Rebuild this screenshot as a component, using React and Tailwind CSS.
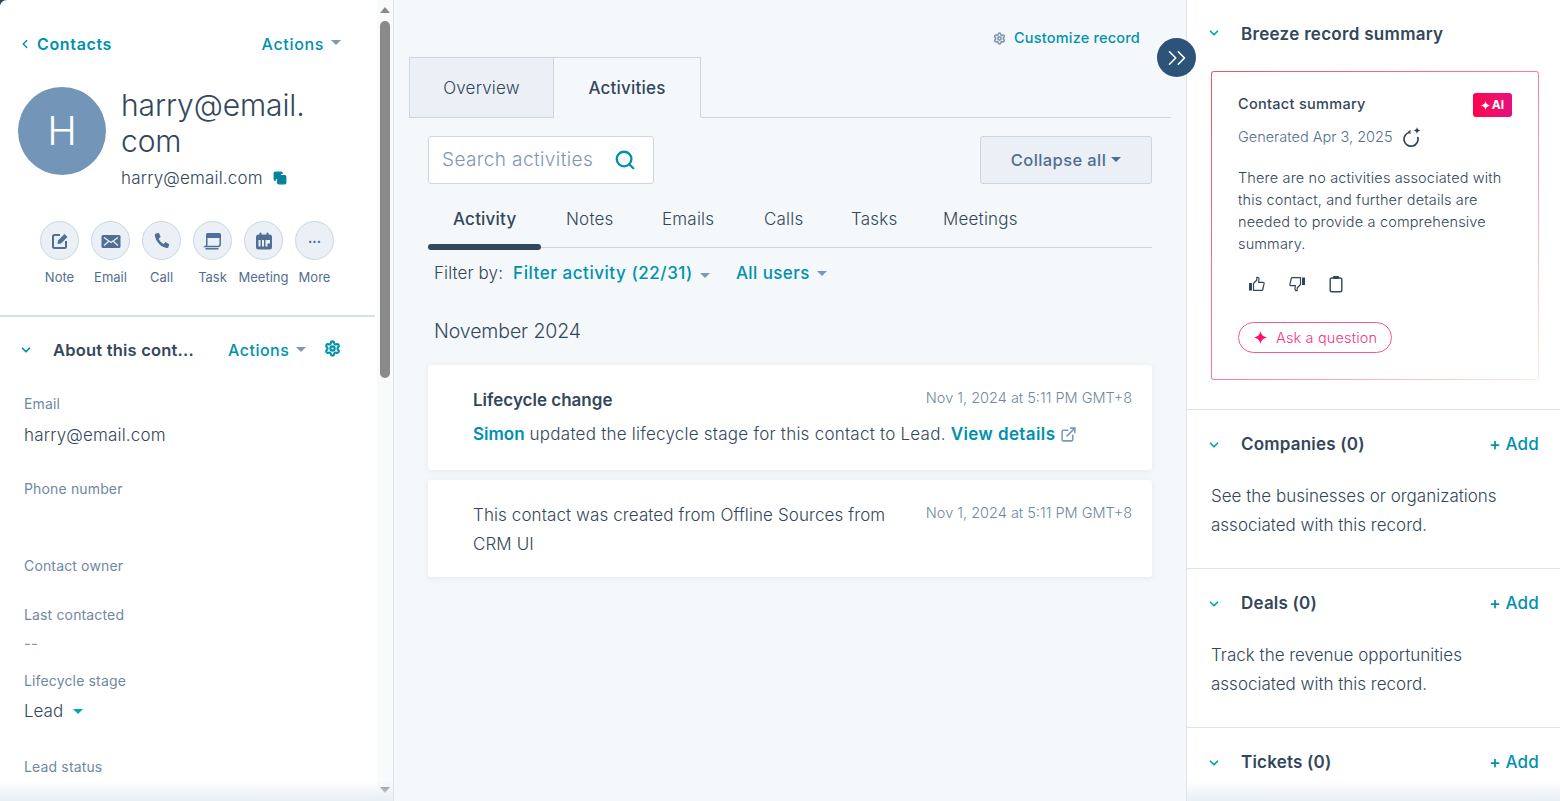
import React from 'react';
import { ChevronDown, ChevronLeft, ChevronsRight, Search, Settings, ExternalLink, Copy, Plus } from 'lucide-react';

function Caret({ className = 'border-t-[#7c98b6]' }) {
  return <span className={`inline-block w-0 h-0 border-x-[5px] border-x-transparent border-t-[5px] ${className}`} />;
}

function NoteIcon() {
  return (
    <svg width="20" height="20" viewBox="0 0 20 20" fill="none">
      <path d="M10 4H4.500A1.500 1.500 0 0 0 3 5.500v10A1.500 1.500 0 0 0 4.500 17h10a1.500 1.500 0 0 0 1.500-1.500V10" stroke="#4f6f94" strokeWidth="2" />
      <path d="M8 9.500 14.500 3 17.500 6 11 12.500 7.500 13z" fill="#4f6f94" />
    </svg>
  );
}

function MailIcon() {
  return (
    <svg width="20" height="20" viewBox="0 0 20 20" fill="none">
      <rect x="0.500" y="4" width="19" height="13" rx="1.500" fill="#4f6f94" />
      <path d="M3 6.500 10 11.500 17 6.500M3 14.500 7.500 10.500M17 14.500 12.500 10.500" stroke="#eaf0f6" strokeWidth="1.300" />
    </svg>
  );
}

function PhoneIcon() {
  return (
    <svg width="20" height="20" viewBox="0 0 20 20" fill="none">
      <path d="M4 2.500 7 2l1.700 4-2 1.600c.8 2.400 2.500 4.300 4.900 5.400l1.800-1.900 3.800 2.100-.7 2.800c-.2.7-1 1.200-1.800 1C8.500 15.800 3.800 10.700 2.900 4.500 2.800 3.500 3.200 2.800 4 2.500z" fill="#4f6f94" />
    </svg>
  );
}

function TaskIcon() {
  return (
    <svg width="20" height="20" viewBox="0 0 20 20" fill="none">
      <rect x="3" y="2" width="15" height="5" rx="1.500" fill="#4f6f94" />
      <path d="M3.800 5v8.500c0 .8-.5 1.500-1.300 2h12.500c1.200 0 2.200-1 2.200-2.200V5" stroke="#4f6f94" strokeWidth="1.500" />
      <path d="M2.500 17.800h13" stroke="#4f6f94" strokeWidth="1.500" />
    </svg>
  );
}

function MeetingIcon() {
  return (
    <svg width="20" height="20" viewBox="0 0 20 20" fill="none">
      <rect x="2" y="3.500" width="16" height="15" rx="2.500" fill="#4f6f94" />
      <rect x="5.500" y="1.500" width="2" height="4" rx="1" fill="#4f6f94" />
      <rect x="12.500" y="1.500" width="2" height="4" rx="1" fill="#4f6f94" />
      <path d="M4.500 9h2v6.500h-2zM8 9h2v6.500H8zM11.500 9h4.500v3.500h-2.500V15.500h-2z" fill="#eaf0f6" />
    </svg>
  );
}

function Sparkle({ size = 10, className = 'text-white' }) {
  return (
    <svg width={size} height={size} viewBox="0 0 12 12" className={className}>
      <path d="M6 0c.5 3.300 2.200 5 6 6-3.800 1-5.500 2.700-6 6-.5-3.300-2.200-5-6-6 3.800-1 5.500-2.700 6-6z" fill="currentColor" />
    </svg>
  );
}

function RegenIcon() {
  return (
    <svg width="20" height="20" viewBox="0 0 20 20" fill="none" stroke="#33475b">
      <path d="M7 5.500a7 7 0 1 0 8.800 5" strokeWidth="1.700" strokeLinecap="round" />
      <path d="M8.500 2.800v4.400L5.800 5z" fill="#33475b" stroke="none" />
      <path d="M15 0c.3 2 1.200 3 3.500 3.500-2.300.5-3.200 1.500-3.500 3.500-.3-2-1.200-3-3.500-3.500C13.800 3 14.700 2 15 0z" fill="#33475b" stroke="none" />
    </svg>
  );
}

function ThumbUp() {
  return (
    <svg width="18" height="18" viewBox="0 0 18 18" fill="none">
      <rect x="1" y="8" width="3" height="7.500" fill="#33475b" />
      <path d="M5.500 8.500 8.800 5V2.300c1.400-.3 2.400.7 2.200 2.200l-.4 2.800h4.600c.6 0 1 .5.900 1.100l-1.300 6.100c-.1.500-.5.900-1 .9H5.500z" stroke="#33475b" strokeWidth="1.200" strokeLinejoin="round" />
    </svg>
  );
}

function ThumbDown() {
  return (
    <svg width="18" height="18" viewBox="0 0 18 18" fill="none">
      <rect x="14" y="2.500" width="3" height="7.500" fill="#33475b" />
      <path d="M12.500 9.500 9.200 13v2.700c-1.400.3-2.400-.7-2.200-2.200l.4-2.800H2.800c-.6 0-1-.5-.9-1.100l1.300-6.100c.1-.5.500-.9 1-.9h8.300z" stroke="#33475b" strokeWidth="1.200" strokeLinejoin="round" />
    </svg>
  );
}

function ClipIcon() {
  return (
    <svg width="16" height="18" viewBox="0 0 16 18" fill="none" stroke="#33475b" strokeWidth="1.400">
      <rect x="2.200" y="3" width="11.600" height="13.800" rx="1.800" />
      <rect x="5" y="1" width="6" height="3" rx="0.800" fill="#33475b" stroke="none" />
    </svg>
  );
}

function Action({ label, children }) {
  return (
    <div className="w-[51px] flex flex-col items-center">
      <div className="w-[39px] h-[39px] rounded-full bg-[#eaf0f6] border border-[#cbd6e2] flex items-center justify-center">
        {children}
      </div>
      <span className="mt-[8px] text-[13px] leading-[18px] text-[#516f90] whitespace-nowrap">{label}</span>
    </div>
  );
}

function Field({ label, height, children }) {
  return (
    <div style={{ height }} className="pl-6">
      <div className="text-[14px] leading-5 text-[#6f88a5] tracking-[0.15px]">{label}</div>
      {children}
    </div>
  );
}

function LeftPanel() {
  return (
    <aside className="w-[394px] shrink-0 h-full flex bg-white border-r border-[#dfe3eb] relative">
      <div className="w-[377px] shrink-0 overflow-hidden">
        <div className="h-[88px] pt-[34px] pl-[18px] pr-[36px] flex items-start justify-between">
          <div className="flex items-center h-5 gap-[5px] text-[#0091ae] font-semibold text-[16px] tracking-[0.65px]">
            <ChevronLeft size={14} strokeWidth={2.500} />
            <span>Contacts</span>
          </div>
          <div className="flex items-center h-5 gap-[7px] text-[#0091ae] font-medium text-[16px] tracking-[0.65px]">
            <span>Actions</span>
            <Caret className="border-t-[#7c98b6] -mt-1" />
          </div>
        </div>
        <div className="h-[104px] pl-[18px] flex">
          <div className="w-[88px] h-[88px] -mt-px rounded-full bg-[#7395b7] text-white text-[40px] font-light flex items-center justify-center shrink-0">H</div>
          <div className="ml-[15px]">
            <div className="text-[30px] leading-[36px] font-light text-[#33475b] -mt-[1px] w-[190px] tracking-[-0.1px]">harry@email.<br />com</div>
            <div className="mt-[7px] flex items-center gap-[10px] text-[#33475b] text-[17px] leading-6 font-light tracking-[0.17px]">
              <span>harry@email.com</span>
              <Copy size={14} className="text-[#00829b] fill-[#00829b]" />
            </div>
          </div>
        </div>
        <div className="h-[124px] pt-[29px] pl-[34px] flex">
          <Action label="Note"><NoteIcon /></Action>
          <Action label="Email"><MailIcon /></Action>
          <Action label="Call"><PhoneIcon /></Action>
          <Action label="Task"><TaskIcon /></Action>
          <Action label="Meeting"><MeetingIcon /></Action>
          <Action label="More"><span className="text-[#4f6f94] text-[13px] leading-none -mt-1 font-bold">...</span></Action>
        </div>
        <div className="h-[2px] bg-[#d6e0ec] w-[375px] -mt-px" />
        <div className="h-[63px] pt-[22px] pl-[19px] flex items-start">
          <ChevronDown size={14} strokeWidth={3} className="text-[#0091ae] mt-[4px]" />
          <span className="ml-[20px] w-[175px] text-[#33475b] font-semibold text-[16.500px] leading-[22px] tracking-[0.2px] whitespace-nowrap">About this cont...</span>
          <span className="text-[#0091ae] font-medium text-[16px] leading-[22px] tracking-[0.5px]">Actions</span>
          <Caret className="border-t-[#7c98b6] ml-[7px] mt-[8px]" />
          <Settings size={17} strokeWidth={3} className="text-[#0091ae] ml-[18px] mt-[1px]" />
        </div>
        <div className="pt-[14px]">
          <Field label="Email" height={85}>
            <div className="mt-[9px] text-[17px] leading-6 font-light text-[#33475b] tracking-[0.17px]">harry@email.com</div>
          </Field>
          <Field label="Phone number" height={77} />
          <Field label="Contact owner" height={49} />
          <Field label="Last contacted" height={66}>
            <div className="mt-[7px] text-[15px] leading-6 text-[#7c98b6]">--</div>
          </Field>
          <Field label="Lifecycle stage" height={86}>
            <div className="mt-[8px] flex items-center gap-[10px] text-[17px] leading-6 font-light text-[#33475b]">
              <span>Lead</span>
              <Caret className="border-t-[#00a4bd]" />
            </div>
          </Field>
          <Field label="Lead status" height={30} />
        </div>
      </div>
      <div className="w-[16px] shrink-0 flex flex-col items-center bg-[#f8fafc] pt-[7px] pb-[8px]">
        <Caret className="!border-t-0 border-b-[6px] border-b-[#8a8a8a]" />
        <div className="w-[10px] h-[357px] mt-[8px] bg-[#8a8a8a] rounded-[5px]" />
        <div className="flex-1" />
        <Caret className="!border-t-[6px] border-t-[#8a8a8a]" />
      </div>
      <div className="absolute left-0 top-0 w-[7px] h-[7px] bg-[#2e475d] [clip-path:path('M0_0H7C3_0_0_3_0_7Z')]" />
      <div className="absolute left-0 right-0 bottom-0 h-[20px] bg-gradient-to-b from-transparent to-[#e8eff5]" />
    </aside>
  );
}

function SubTab({ label, active, width }) {
  return (
    <div style={{ width }} className={`h-[36px] text-[17px] leading-6 pl-[25px] whitespace-nowrap tracking-[0.2px] ${active ? 'font-medium text-[#33475b]' : 'font-light text-[#33475b]'}`}>
      {label}
    </div>
  );
}

function Card({ height, children }) {
  return (
    <div style={{ height }} className="bg-white rounded-[3px] shadow-[0_1px_6px_rgba(45,62,80,0.08)] pl-[45px] pr-5 flex justify-between text-[#33475b]">
      {children}
    </div>
  );
}

function Stamp() {
  return <span className="shrink-0 text-[14.500px] leading-5 text-[#6f88a5] font-light whitespace-nowrap mt-[23px]">Nov 1, 2024 at 5:11 PM GMT+8</span>;
}

function Middle() {
  return (
    <main className="w-[793px] shrink-0 h-full bg-[#f5f8fa] pl-[15px] pr-[15px] border-r border-[#dfe3eb] relative">
      <div className="h-[57px] pt-[28px] pr-[31px] flex justify-end items-start">
        <div className="flex items-center gap-[8px] text-[#0091ae] font-medium text-[14.500px] leading-5 tracking-[0.2px]">
          <Settings size={13} className="text-[#7c98b6]" strokeWidth={3} />
          <span>Customize record</span>
        </div>
      </div>
      <div className="h-[61px] flex border-b-[1.500px] border-[#cbd6e2]">
        <div className="w-[145px] h-[61px] pt-[2px] bg-[#eaf0f6] border border-[#cbd6e2] flex items-center justify-center text-[17px] font-light text-[#33475b] tracking-[0.2px]">Overview</div>
        <div className="w-[147px] h-[61px] pt-[2px] bg-[#f5f8fa] border border-l-0 border-[#cbd6e2] border-b-[#f5f8fa] flex items-center justify-center text-[17px] font-medium text-[#33475b] tracking-[0.2px]">Activities</div>
      </div>
      <div className="mt-[18px] ml-[19px] mr-[19px] flex justify-between">
        <div className="w-[226px] h-[48px] bg-white border border-[#cbd6e2] rounded-[3px] flex items-center pl-[13px] pr-[17px] justify-between">
          <span className="text-[19px] pt-[1px] font-light text-[#7c98b6] tracking-[0.4px]">Search activities</span>
          <Search size={22} strokeWidth={2.500} className="text-[#0091ae]" />
        </div>
        <div className="w-[172px] h-[48px] bg-[#eaf0f6] border border-[#cbd6e2] rounded-[3px] flex items-center justify-center gap-[5px] text-[#506e91] font-medium text-[16.500px] tracking-[0.4px]">
          <span>Collapse all</span>
          <Caret className="border-t-[#506e91] -mt-[2px]" />
        </div>
      </div>
      <div className="mt-[23px] ml-[19px] mr-[19px] border-b border-[#cbd6e2] relative h-[41px] flex">
        <SubTab label="Activity" active width={113} />
        <SubTab label="Notes" width={96} />
        <SubTab label="Emails" width={102} />
        <SubTab label="Calls" width={87} />
        <SubTab label="Tasks" width={92} />
        <SubTab label="Meetings" width={130} />
        <div className="absolute left-0 bottom-[-3px] w-[113px] h-[6px] bg-[#33475b] rounded-[3px]" />
      </div>
      <div className="mt-[14px] ml-[25px] h-6 flex items-center text-[17px] whitespace-nowrap">
        <span className="font-light text-[#33475b] tracking-[0.1px]">Filter by:</span>
        <span className="ml-[10px] text-[#0091ae] font-medium tracking-[0.55px]">Filter activity (22/31)</span>
        <Caret className="border-t-[#7c98b6] ml-[7px] mt-[2px]" />
        <span className="ml-[26px] text-[#0091ae] font-medium tracking-[0.4px]">All users</span>
        <Caret className="border-t-[#7c98b6] ml-[7px] -mt-[2px]" />
      </div>
      <div className="mt-[31px] ml-[25px] text-[19.500px] leading-7 font-light text-[#33475b] tracking-[-0.1px]">November 2024</div>
      <div className="mt-5 ml-[19px] mr-[19px] flex flex-col gap-[10px]">
        <Card height={105}>
          <div className="pt-[23px] w-[420px] shrink-0">
            <div className="font-semibold text-[17px] leading-6">Lifecycle change</div>
            <div className="mt-[10px] text-[17px] leading-6 font-light flex items-center whitespace-nowrap">
              <span className="text-[#0091ae] font-semibold">Simon</span>
              <span className="tracking-[0.24px]">&nbsp;updated the lifecycle stage for this contact to Lead.&nbsp;</span>
              <span className="text-[#0091ae] font-semibold tracking-[0.4px]">View details</span>
              <ExternalLink size={17} className="ml-[5px] shrink-0 text-[#7c98b6]" strokeWidth={2.200} />
            </div>
          </div>
          <Stamp />
        </Card>
        <Card height={97}>
          <div className="pt-[21px] w-[420px] text-[17px] leading-[29px] font-light tracking-[0.1px]">This contact was created from Offline Sources from CRM UI</div>
          <Stamp />
        </Card>
      </div>
    </main>
  );
}

function Section({ title, text, height }) {
  return (
    <section style={{ height }} className="border-t-[1.500px] border-[#dfe3eb] pl-[20px] pr-[21px]">
      <div className="pt-[24px] flex items-center h-[46px]">
        <ChevronDown size={14} strokeWidth={3} className="text-[#00a4bd] -mt-[1px]" />
        <span className="ml-[20px] font-semibold text-[17px] text-[#33475b] tracking-[0.2px]">{title}</span>
        <div className="ml-auto flex items-center gap-[4px] text-[#0091ae] font-medium text-[17px] tracking-[0.2px]">
          <Plus size={12} strokeWidth={3.500} />
          <span>Add</span>
        </div>
      </div>
      {text && <p className="ml-[4px] mt-[26px] w-[300px] text-[17px] leading-[29px] font-light text-[#33475b]">{text}</p>}
    </section>
  );
}

function Right() {
  return (
    <aside className="flex-1 h-full bg-white relative overflow-hidden">
      <div className="h-[409px]">
        <div className="h-[71px] pt-[23px] pl-[20px] flex items-start">
          <ChevronDown size={14} strokeWidth={3} className="text-[#00a4bd] mt-[3px]" />
          <span className="ml-[20px] font-semibold text-[17px] leading-[22px] text-[#33475b] tracking-[0.3px]">Breeze record summary</span>
        </div>
        <div className="ml-[24px] mr-[21px] h-[309px] p-px rounded-[3px] bg-gradient-to-br from-[#f2545b] via-[#ff7a9c] to-[#ffe9e2]">
          <div className="h-full bg-white rounded-[2px] pl-[26px] pr-[26px] pt-[21px]">
            <div className="flex justify-between items-start">
              <span className="font-medium text-[14.500px] leading-6 text-[#33475b] mt-[-1px] tracking-[0.3px]">Contact summary</span>
              <span className="w-[39px] h-[24px] rounded-[3px] bg-gradient-to-r from-[#ff0049] to-[#e5107c] text-white text-[12px] font-bold flex items-center justify-center gap-[2px]">
                <Sparkle size={9} />AI
              </span>
            </div>
            <div className="mt-[8px] flex items-center gap-[9px] text-[14.500px] leading-6 font-light text-[#516f90]">
              <span>Generated Apr 3, 2025</span>
              <RegenIcon />
            </div>
            <p className="mt-[18px] text-[14.500px] leading-[22px] font-light text-[#33475b] w-[275px] tracking-[0.15px]">There are no activities associated with this contact, and further details are needed to provide a comprehensive summary.</p>
            <div className="mt-[20px] pl-[10px] flex items-center gap-[22px] text-[#33475b]">
              <ThumbUp />
              <ThumbDown />
              <ClipIcon />
            </div>
            <div className="mt-[29px] w-[154px] h-[31px] rounded-full border border-[#f8578f] flex items-center pl-[15px] gap-[9px] text-[#f0368a] text-[14.500px] font-light tracking-[0.15px]">
              <Sparkle size={13} className="text-[#ff0f6a]" />
              <span>Ask a question</span>
            </div>
          </div>
        </div>
      </div>
      <Section title="Companies (0)" text="See the businesses or organizations associated with this record." height={159} />
      <Section title="Deals (0)" text="Track the revenue opportunities associated with this record." height={159} />
      <Section title="Tickets (0)" height={74} />
      <div className="absolute left-0 right-0 bottom-0 h-[20px] bg-gradient-to-b from-transparent to-[#e8eff5]" />
    </aside>
  );
}

export default function App() {
  return (
    <div className="w-[1560px] h-[801px] flex overflow-hidden relative font-['Inter',sans-serif]">
      <LeftPanel />
      <Middle />
      <Right />
      <div className="absolute left-[1157px] top-[38px] w-[39px] h-[39px] rounded-full bg-[#2d5378] flex items-center justify-center text-white">
        <ChevronsRight size={30} strokeWidth={1.300} />
      </div>
    </div>
  );
}
